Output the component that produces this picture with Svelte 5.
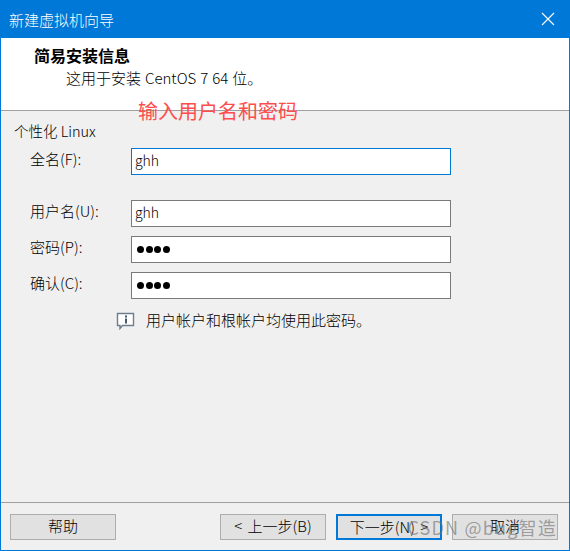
<script>
  const fields = [
    { label: '全名(F):', value: 'ghh', cls: 'focus first' },
    { label: '用户名(U):', value: 'ghh', cls: 'gap' },
    { label: '密码(P):', value: '●●●●', cls: 'pw' },
    { label: '确认(C):', value: '●●●●', cls: 'pw' }
  ];
</script>

<div class="win">
  <header class="title">
    <span>新建虚拟机向导</span>
    <svg class="close" width="14" height="14" viewBox="0 0 14 14"><path d="M1 1L13 13M13 1L1 13" stroke="#fff" stroke-width="1.1" fill="none"/></svg>
  </header>
  <section class="head">
    <h1>简易安装信息</h1>
    <p>这用于安装 CentOS 7 64 位。</p>
  </section>
  <main class="body">
    <div class="group">个性化 Linux</div>
    {#each fields as f}
      <div class="row {f.cls}">
        <label for={f.label}>{f.label}</label>
        <div class="input" id={f.label}>{#if f.cls === 'pw'}<i></i><i></i><i></i><i></i>{:else}<span>{f.value}</span>{/if}</div>
      </div>
    {/each}
    <div class="note">
      <svg width="20" height="18" viewBox="0 0 20 18">
        <path d="M1.5 1.5H17.5V13.5H6.5L4 16.5V13.5H1.5Z" fill="#fff" stroke="#6d7f8f" stroke-width="1.4"/>
        <rect x="9" y="3.5" width="2" height="2" fill="#44586a"/>
        <rect x="9" y="6.5" width="2" height="5" fill="#44586a"/>
      </svg>
      <span>用户帐户和根帐户均使用此密码。</span>
    </div>
  </main>
  <footer class="foot">
    <button class="help">帮助</button>
    <button class="back">&lt; 上一步(B)</button>
    <button class="next">下一步(N) &gt;</button>
    <button class="cancel">取消</button>
  </footer>
  <div class="anno">输入用户名和密码</div>
  <div class="mark">CSDN @bug智造</div>
</div>

<style>
  :global(body) { margin: 0; }
  .win {
    position: relative;
    width: 570px; height: 551px; box-sizing: border-box;
    border: 1px solid #0078d7; border-top: 0;
    background: #f0f0f0; display: flex; flex-direction: column;
    font-family: "Noto Sans CJK SC", sans-serif; font-size: 15px; font-weight: 300; color: #000;
    overflow: hidden;
  }
  .title {
    height: 38px; flex: none; background: #0078d7; color: #fff;
    display: flex; align-items: center; justify-content: space-between;
    padding: 0 8px 0 9px; margin: 0 -1px; font-size: 15px;
  }
  .close { margin-right: 7px; }
  .head {
    height: 73px; flex: none; box-sizing: border-box; background: #fff;
    border-bottom: 1px solid #a0a0a0; padding-top: 7px;
  }
  h1 { margin: 0 0 0 33px; font-size: 16px; font-weight: 700; line-height: 20px; }
  .head p { margin: 3px 0 0 65px; line-height: 20px; word-spacing: 0.7px; }
  .body { flex: 1; padding: 10px 0 0 13px; }
  .group { line-height: 20px; height: 20px; font-size: 14.5px; }
  .row { display: flex; align-items: center; margin-top: 9px; padding-left: 16px; }
  .row.first { margin-top: 7px; }
  .row.gap { margin-top: 25px; }
  .row label { width: 101px; line-height: 20px; position: relative; top: -3px; }
  .input {
    width: 320px; height: 27px; box-sizing: border-box; background: #fff;
    border: 1px solid #7a7a7a; padding: 0 3px;
    display: flex; align-items: center; gap: 1.5px; font-size: 14px;
  }
  .input span { position: relative; top: -2px; }
  .focus .input { border-color: #0078d7; }
  .pw .input { padding-left: 5px; }
  .input i { width: 7px; height: 7px; border-radius: 50%; background: #000; display: block; }
  .note { display: flex; align-items: center; gap: 10px; margin: 12px 0 0 102px; }
  .note span { line-height: 20px; position: relative; top: -1px; }
  .foot {
    flex: none; height: 48px; border-top: 1px solid #a0a0a0;
    display: flex; align-items: flex-start; padding: 11px 0 0 9px;
    box-sizing: border-box;
  }
  button {
    width: 106px; height: 26px; padding: 0 0 2px; box-sizing: border-box;
    background: #e1e1e1; border: 1px solid #adadad; font: inherit; color: #000;
    line-height: 22px; word-spacing: 2px;
  }
  .back { margin-left: 104px; }
  .next { margin-left: 10px; border: 2px solid #0078d7; }
  .cancel { margin-left: 10px; }
  .anno {
    position: absolute; left: 137px; top: 97px; color: #ff4d4d;
    font-size: 20px; font-weight: 400; line-height: 28px; white-space: nowrap;
  }
  .mark {
    position: absolute; right: 12px; top: 514px; font-size: 18px; font-weight: 400; line-height: 26px;
    color: rgba(110,110,110,0.6); white-space: nowrap; letter-spacing: 1.2px;
  }
</style>
